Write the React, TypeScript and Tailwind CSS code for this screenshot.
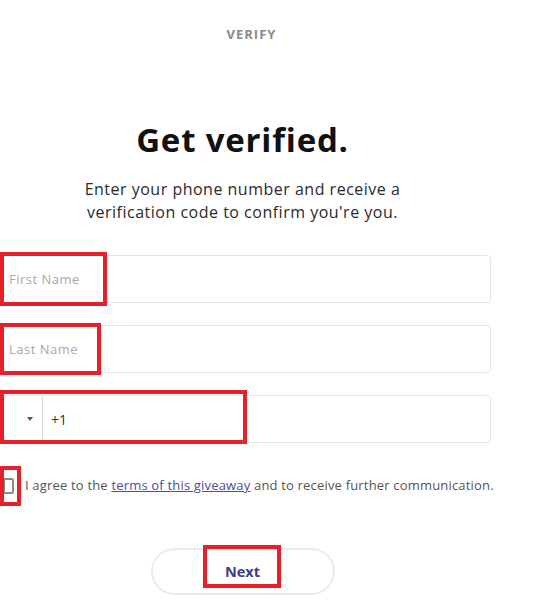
import { FC } from 'react';

const RedBox: FC<{ className: string }> = ({ className }) => (
  <div className={'pointer-events-none absolute border-4 border-[#e8202a] ' + className} />
);

export default function App() {
  return (
    <div className="w-[535px] h-[600px] overflow-hidden bg-white font-['Open_Sans',sans-serif] text-[#1a1a1a]">
      <div className="w-[491px]">
        {/* header */}
        <div className="w-[485px]">
          <div className="pt-[27px] pl-[18px] text-center text-[13px] font-bold tracking-[1px] leading-[15px] text-[#8a8a8a]">
            VERIFY
          </div>

          <h1 className="mt-[78px] text-center text-[33px] font-bold leading-[40px] tracking-[0.8px] text-[#111]">
            Get verified.
          </h1>

          <p className="mt-[18px] text-center text-[16px] leading-[23px] tracking-[0.5px] text-[#2a2a2a]">
            Enter your phone number and receive a
            <br />
            verification code to confirm you're you.
          </p>
        </div>

        {/* form */}
        <div className="mt-[31px] flex flex-col gap-[22px]">
          <div className="relative">
            <input
              placeholder="First Name"
              className="block h-[48px] w-full rounded-[4px] border border-[#e4e4e4] px-[8px] text-[13px] tracking-[0.5px] outline-none placeholder:text-[#a8a8a8]"
            />
            <RedBox className="left-0 top-[-3px] h-[54px] w-[107px]" />
          </div>

          <div className="relative">
            <input
              placeholder="Last Name"
              className="block h-[48px] w-full rounded-[4px] border border-[#e4e4e4] px-[8px] text-[13px] tracking-[0.5px] outline-none placeholder:text-[#a8a8a8]"
            />
            <RedBox className="left-0 top-[-2px] h-[52px] w-[101px]" />
          </div>

          <div className="relative">
            <div className="flex h-[48px] w-full items-center rounded-[4px] border border-[#e4e4e4]">
              <div className="flex h-full w-[42px] items-center justify-end border-r border-[#d8d8d8] pr-[9px]">
                <svg width="6" height="4" viewBox="0 0 6 4">
                  <path d="M0 0h6L3 4z" fill="#555" />
                </svg>
              </div>
              <span className="pl-[8px] text-[14px] text-[#333]">+1</span>
            </div>
            <RedBox className="left-0 top-[-5px] h-[54px] w-[247px]" />
          </div>
        </div>

        {/* consent */}
        <div className="relative mt-[23px] flex h-[40px] items-center">
          <div className="ml-[3px] h-[16px] w-[11px] shrink-0 rounded-[2px] border-2 border-[#8a8a8a]" />
          <span className="ml-[11px] whitespace-nowrap text-[13px] tracking-[0.18px] text-[#555]">
            I agree to the{' '}
            <a href="#" className="text-[#4b4ba8] underline">
              terms of this giveaway
            </a>{' '}
            and to receive further communication.
          </span>
          <RedBox className="left-0 top-0 h-[40px] w-[21px]" />
        </div>

        {/* next */}
        <div className="mt-[42px] flex w-[485px] justify-center">
          <div className="relative">
            <button className="h-[47px] w-[184px] rounded-full border-2 border-[#ebebeb] text-[14.5px] font-bold text-[#3d3d8e]">
              Next
            </button>
            <RedBox className="left-[52px] top-[-3px] h-[43px] w-[78px]" />
          </div>
        </div>
      </div>
    </div>
  );
}
